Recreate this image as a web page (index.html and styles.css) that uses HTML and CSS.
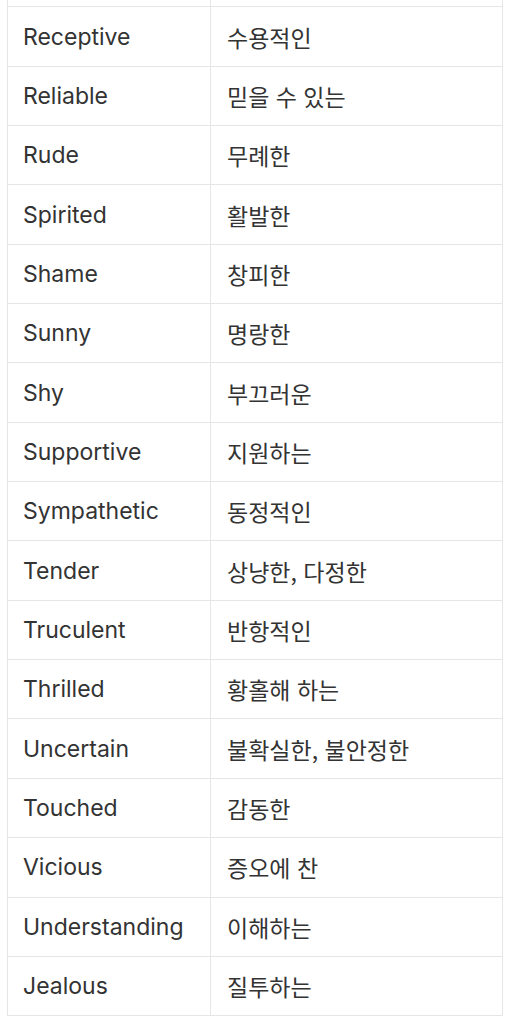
FILE: index.html
```html
<!DOCTYPE html>
<html lang="ko">
<head>
<meta charset="utf-8">
<link rel="stylesheet" href="styles.css">
</head>
<body>
<table class="vocab">
<tbody>
<tr><td class="en">&nbsp;</td><td class="ko">&nbsp;</td></tr>
<tr><td class="en">Receptive</td><td class="ko">수용적인</td></tr>
<tr><td class="en">Reliable</td><td class="ko">믿을 수 있는</td></tr>
<tr><td class="en">Rude</td><td class="ko">무례한</td></tr>
<tr><td class="en">Spirited</td><td class="ko">활발한</td></tr>
<tr><td class="en">Shame</td><td class="ko">창피한</td></tr>
<tr><td class="en">Sunny</td><td class="ko">명랑한</td></tr>
<tr><td class="en">Shy</td><td class="ko">부끄러운</td></tr>
<tr><td class="en">Supportive</td><td class="ko">지원하는</td></tr>
<tr><td class="en">Sympathetic</td><td class="ko">동정적인</td></tr>
<tr><td class="en">Tender</td><td class="ko">상냥한, 다정한</td></tr>
<tr><td class="en">Truculent</td><td class="ko">반항적인</td></tr>
<tr><td class="en">Thrilled</td><td class="ko">황홀해 하는</td></tr>
<tr><td class="en">Uncertain</td><td class="ko">불확실한, 불안정한</td></tr>
<tr><td class="en">Touched</td><td class="ko">감동한</td></tr>
<tr><td class="en">Vicious</td><td class="ko">증오에 찬</td></tr>
<tr><td class="en">Understanding</td><td class="ko">이해하는</td></tr>
<tr><td class="en">Jealous</td><td class="ko">질투하는</td></tr>
</tbody>
</table>
</body>
</html>
```
FILE: styles.css
```css
html, body {
  margin: 0;
  padding: 0;
  background: #ffffff;
}
body {
  font-family: Inter, "Noto Sans CJK KR", sans-serif;
  color: #333333;
  overflow: hidden;
}
.vocab {
  border-collapse: collapse;
  margin: -53px 0 0 7px;
  width: 496px;
  table-layout: fixed;
}
.vocab td {
  border: 1px solid #e6e6e6;
  font-size: 23px;
  line-height: 30px;
  padding: 14.18px 15px;
  vertical-align: middle;
  white-space: nowrap;
}
.vocab td.en {
  width: 172px;
  padding-left: 15px;
}
.vocab td.ko {
  font-family: "Noto Sans CJK KR", sans-serif;
  padding-left: 16px;
}
```
